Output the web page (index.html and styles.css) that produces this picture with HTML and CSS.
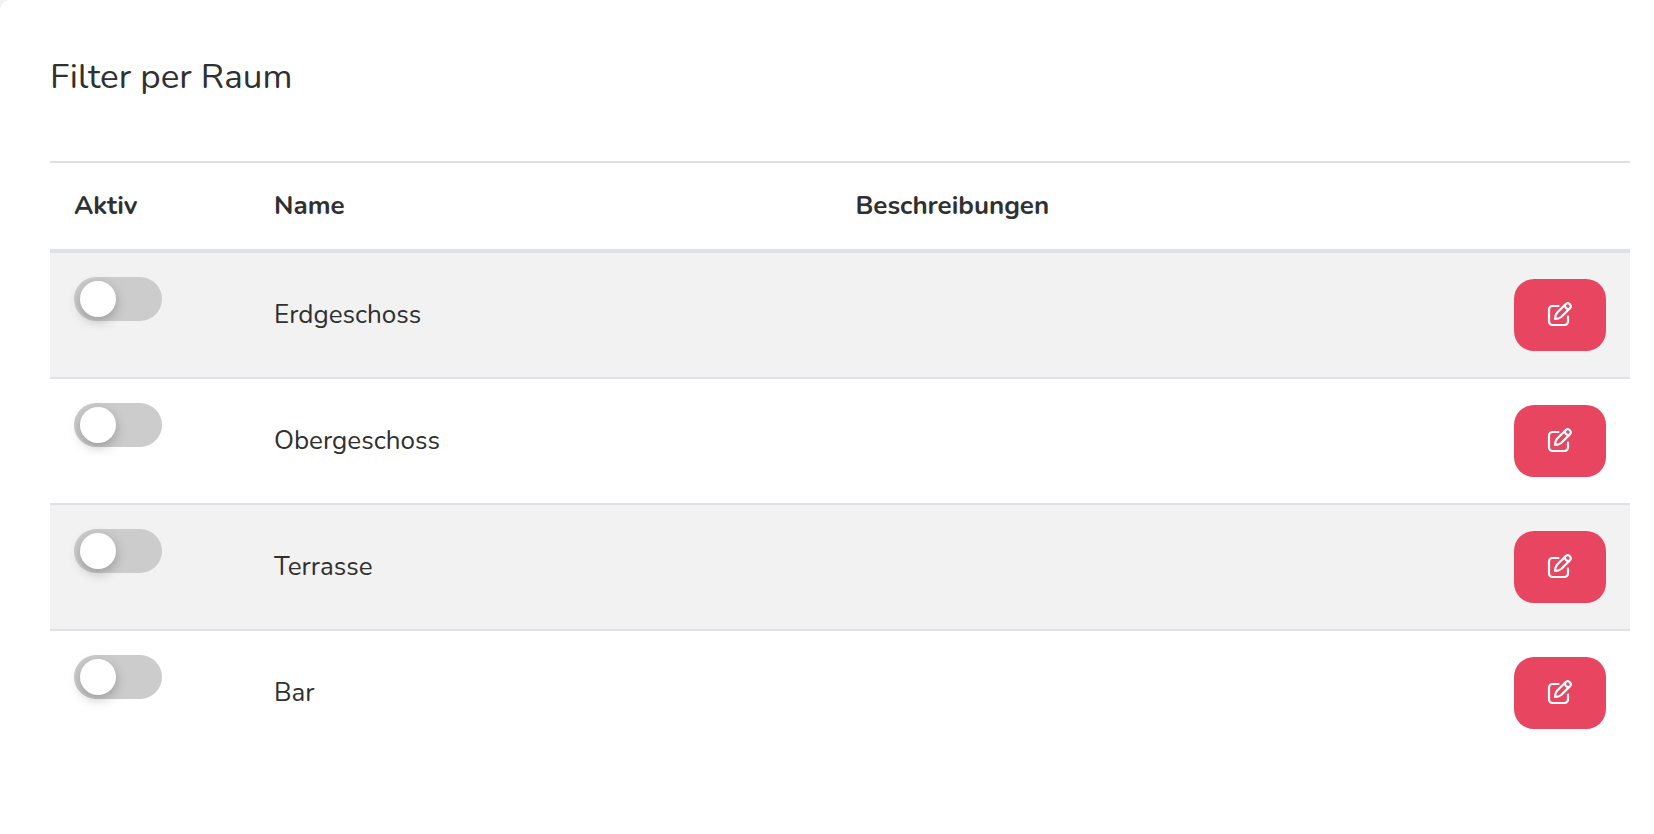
FILE: index.html
```html
<!DOCTYPE html>
<html lang="de">
<head>
<meta charset="utf-8">
<meta name="viewport" content="width=device-width, initial-scale=1">
<title>Filter per Raum</title>
<link rel="stylesheet" href="styles.css">
</head>
<body>
<svg class="sprite" aria-hidden="true">
  <symbol id="edit" viewBox="0 0 26 26">
    <g fill="none" stroke="currentColor" stroke-width="2.2" stroke-linecap="round" stroke-linejoin="round">
      <path d="M11.5 4H5.500A3.500 3.500 0 0 0 2 7.500V19.500A3.500 3.500 0 0 0 5.500 23H17.500A3.500 3.500 0 0 0 21 19.500V14.500"/>
      <path d="M18.600 2.200A2.900 2.900 0 0 1 22.800 6.400L14.200 15C12.400 16.400 10.300 17 8 17C8 14.700 8.600 12.600 10 10.800Z"/>
      <path d="M17.800 3.200C18 5.600 19.400 7 21.800 7.200"/>
    </g>
  </symbol>
</svg>
<main class="card">
  <h1 class="title">Filter per Raum</h1>
  <table class="rooms">
    <thead>
      <tr>
        <th class="col-active" scope="col">Aktiv</th>
        <th class="col-name" scope="col">Name</th>
        <th scope="col">Beschreibungen</th>
        <th class="col-action"></th>
      </tr>
    </thead>
    <tbody>
      <tr>
        <td class="active"><input class="switch" type="checkbox" role="switch" aria-labelledby="room-1"></td>
        <td id="room-1">Erdgeschoss</td>
        <td></td>
        <td class="action"><button class="edit" type="button" aria-labelledby="room-1"><svg class="icon"><use href="#edit"/></svg></button></td>
      </tr>
      <tr>
        <td class="active"><input class="switch" type="checkbox" role="switch" aria-labelledby="room-2"></td>
        <td id="room-2">Obergeschoss</td>
        <td></td>
        <td class="action"><button class="edit" type="button" aria-labelledby="room-2"><svg class="icon"><use href="#edit"/></svg></button></td>
      </tr>
      <tr>
        <td class="active"><input class="switch" type="checkbox" role="switch" aria-labelledby="room-3"></td>
        <td id="room-3">Terrasse</td>
        <td></td>
        <td class="action"><button class="edit" type="button" aria-labelledby="room-3"><svg class="icon"><use href="#edit"/></svg></button></td>
      </tr>
      <tr>
        <td class="active"><input class="switch" type="checkbox" role="switch" aria-labelledby="room-4"></td>
        <td id="room-4">Bar</td>
        <td></td>
        <td class="action"><button class="edit" type="button" aria-labelledby="room-4"><svg class="icon"><use href="#edit"/></svg></button></td>
      </tr>
    </tbody>
  </table>
</main>
</body>
</html>
```
FILE: styles.css
```css
* {
  box-sizing: border-box;
}

body {
  margin: 0;
  background: #f1f1f1;
  color: #303030;
  font-family: Nunito, Lato, "Open Sans", sans-serif;
  font-size: 26px;
  line-height: 36px;
}

.sprite {
  display: none;
}

.card {
  min-height: 100vh;
  padding: 53px 24px 24px 50px;
  background: #fff;
  border-top-left-radius: 10px;
}

.title {
  margin: 0 0 60px;
  font-size: 35px;
  font-weight: 400;
  line-height: 48px;
}

.rooms {
  width: 100%;
  table-layout: fixed;
  border-spacing: 0;
}

.rooms th {
  padding: 25px 24px;
  border-top: 2px solid #dee2e6;
  border-bottom: 4px solid #dee2e6;
  font-weight: 700;
  text-align: left;
}

.rooms .col-active {
  width: 200px;
}

.rooms .col-name {
  width: 36.8%;
}

.rooms .col-action {
  width: 140px;
}

.rooms td {
  padding: 26px 24px;
  vertical-align: middle;
}

.rooms tbody tr + tr td {
  border-top: 2px solid #dee2e6;
}

.rooms tbody tr:nth-child(odd) {
  background: #f2f2f2;
}

.rooms .active {
  padding-top: 24px;
  vertical-align: top;
}

.switch {
  display: block;
  appearance: none;
  width: 88px;
  height: 44px;
  margin: 0;
  padding: 4px 6px;
  border-radius: 22px;
  background: #ccc;
  cursor: pointer;
}

.switch::before {
  content: "";
  display: block;
  width: 36px;
  height: 36px;
  border-radius: 50%;
  background: #fff;
  box-shadow: 0 4px 12px rgba(0, 0, 0, 0.25);
}

.switch:checked {
  background: #e84560;
}

.switch:checked::before {
  margin-left: auto;
}

.edit {
  display: flex;
  align-items: center;
  justify-content: center;
  width: 92px;
  height: 72px;
  margin: 0;
  padding: 0;
  border: 0;
  border-radius: 20px;
  background: #e84560;
  color: #fff;
  cursor: pointer;
}

.icon {
  width: 26px;
  height: 26px;
}
```
